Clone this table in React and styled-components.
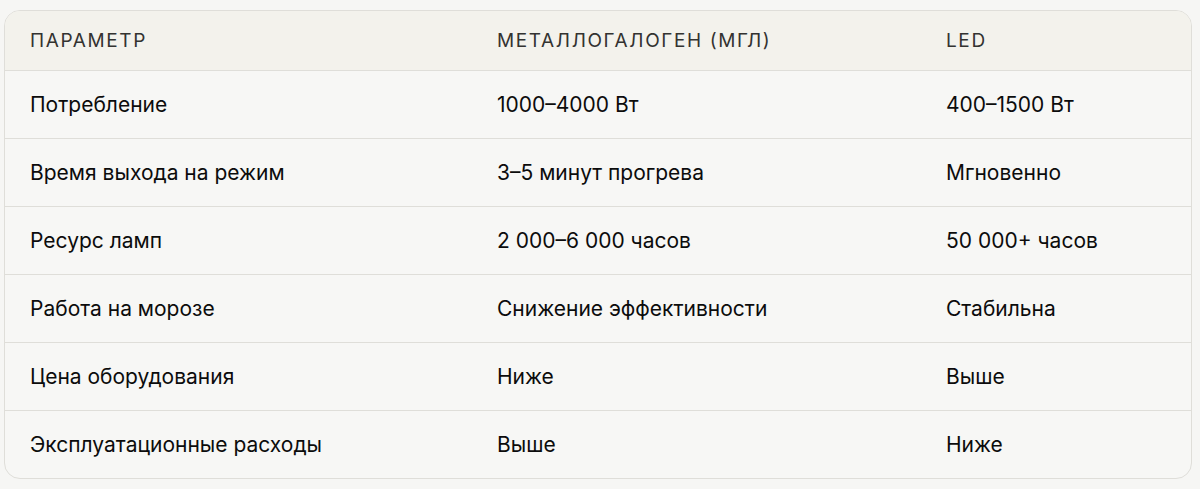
import React from "react";
import styled, { createGlobalStyle } from "styled-components";

const GlobalStyle = createGlobalStyle`
  html, body {
    margin: 0;
    padding: 0;
    background: #f6f6f4;
    font-family: Inter, "Noto Sans", sans-serif;
  }
`;

const columns = ["Параметр", "Металлогалоген (МГЛ)", "LED"];

const rows = [
  ["Потребление", "1000–4000 Вт", "400–1500 Вт"],
  ["Время выхода на режим", "3–5 минут прогрева", "Мгновенно"],
  ["Ресурс ламп", "2 000–6 000 часов", "50 000+ часов"],
  ["Работа на морозе", "Снижение эффективности", "Стабильна"],
  ["Цена оборудования", "Ниже", "Выше"],
  ["Эксплуатационные расходы", "Выше", "Ниже"],
];

export default function App() {
  return (
    <>
      <GlobalStyle />
      <Page>
        <TableWrap>
          <Table>
            <colgroup>
              <col style={{ width: 467 }} />
              <col style={{ width: 449 }} />
              <col />
            </colgroup>
            <thead>
              <tr>
                {columns.map((c) => (
                  <HeadCell key={c}>{c}</HeadCell>
                ))}
              </tr>
            </thead>
            <tbody>
              {rows.map((r, i) => (
                <Row key={i}>
                  {r.map((v, j) => (
                    <Cell key={j}>{v}</Cell>
                  ))}
                </Row>
              ))}
            </tbody>
          </Table>
        </TableWrap>
      </Page>
    </>
  );
}

const Page = styled.div`
  padding: 10px 8px 10px 4px;
`;

const TableWrap = styled.div`
  border: 1px solid #dfded9;
  border-radius: 16px;
  overflow: hidden;
  background: #f7f7f5;
`;

const Table = styled.table`
  width: 100%;
  border-collapse: collapse;
  table-layout: fixed;
`;

const HeadCell = styled.th`
  height: 59px;
  padding: 0 0 0 25px;
  text-align: left;
  background: #f3f2ec;
  border-bottom: 1px solid #dfded9;
  font-size: 19px;
  font-weight: 400;
  letter-spacing: 0.085em;
  text-transform: uppercase;
  color: #333331;
  white-space: nowrap;
`;

const Row = styled.tr`
  & + & td {
    border-top: 1px solid #dfded9;
  }
`;

const Cell = styled.td`
  height: 67px;
  padding: 0 0 0 25px;
  font-size: 21px;
  font-weight: 420;
  color: #0c0c0c;
  white-space: nowrap;
`;
